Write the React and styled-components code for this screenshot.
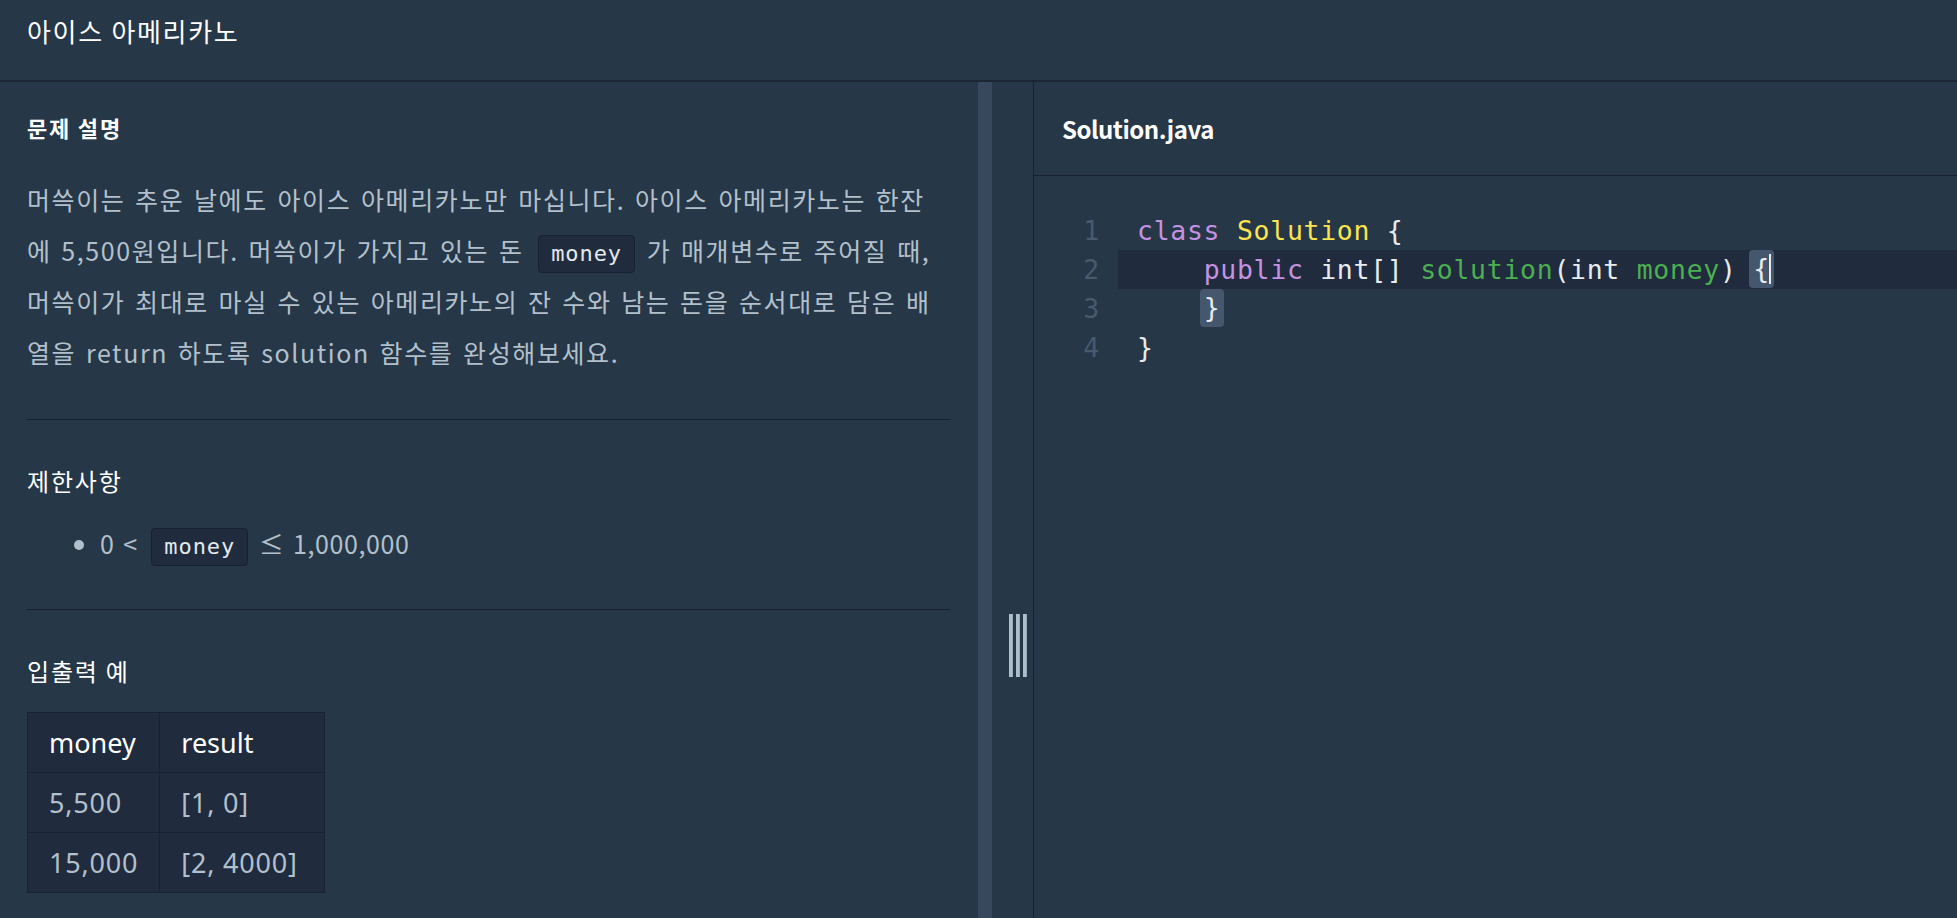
import React from 'react';
import styled, { createGlobalStyle } from 'styled-components';

const KR = `"Noto Sans CJK KR", "Noto Sans", sans-serif`;
const MONO = `"DejaVu Sans Mono", "Liberation Mono", monospace`;

const GlobalStyle = createGlobalStyle`
  html, body { margin: 0; padding: 0; height: 100%; overflow: hidden; background: #263747; }
  #root { height: 100%; }
  *, *::before, *::after { box-sizing: border-box; }
`;

const Page = styled.div`
  height: 100vh;
  display: flex;
  flex-direction: column;
  background: #263747;
  font-family: ${KR};
`;

const TopBar = styled.header`
  height: 82px;
  flex-shrink: 0;
  border-bottom: 2px solid #1b2533;
  padding: 14px 0 0 27px;
  color: #ffffff;
  font-size: 26px;
  letter-spacing: 1.7px;
  line-height: 34px;
`;

const Body = styled.div`
  flex: 1;
  min-height: 0;
  display: flex;
`;

const LeftPanel = styled.section`
  width: 978px;
  flex-shrink: 0;
  padding: 0 28px 0 27px;
  overflow: hidden;
`;

const Section = styled.div`
  padding-top: ${(p) => p.$top}px;
  padding-bottom: ${(p) => p.$bottom || 0}px;
  border-bottom: ${(p) => (p.$divider ? '1px solid #172130' : 'none')};
`;

const Heading = styled.h5`
  margin: 0;
  color: #ffffff;
  font-size: ${(p) => (p.$bold ? 22 : 24)}px;
  font-weight: ${(p) => (p.$bold ? 700 : 400)};
  letter-spacing: 1.8px;
  line-height: 30px;
`;

const Paragraph = styled.p`
  max-width: 914px;
  margin: 32px 0 0;
  color: #b2c0cc;
  font-size: 25px;
  line-height: 51px;
  letter-spacing: 1.6px;
  word-spacing: 2.5px;
`;

const InlineCode = styled.code`
  display: inline-block;
  height: 38px;
  margin: 0 2px 0 5px;
  padding: 0 12px;
  vertical-align: middle;
  background: #202b3d;
  border: 1px solid #172130;
  border-radius: 4px;
  color: #e3e9ef;
  font-family: ${MONO};
  font-size: 22px;
  letter-spacing: 0.9px;
  line-height: 36px;
  word-spacing: 0;
`;

const List = styled.ul`
  margin: 22px 0 0;
  padding-left: 73px;
  color: #b2c0cc;
  font-size: 25px;
  line-height: 51px;
  letter-spacing: 0.6px;
  word-spacing: 2.5px;
`;

const Table = styled.table`
  margin-top: 26px;
  border-collapse: collapse;
  background: #202b3d;
  font-family: "Noto Sans", "Noto Sans CJK KR", sans-serif;
  font-size: 27px;
`;

const Cell = styled.td`
  width: ${(p) => p.$w}px;
  height: 60px;
  padding: 0 21px;
  border: 1px solid #172130;
  color: ${(p) => (p.$head ? '#ffffff' : '#b2c0cc')};
  font-weight: 400;
  letter-spacing: ${(p) => (p.$head ? 0 : 0.8)}px;
  text-align: left;
  vertical-align: middle;
  white-space: nowrap;
`;

const Strip = styled.div`
  width: 14px;
  flex-shrink: 0;
  background: #37485d;
`;

const Splitter = styled.div`
  width: 41px;
  flex-shrink: 0;
  padding: 532px 0 0 17px;
`;

const Handle = styled.div`
  display: flex;
  gap: 3px;
`;

const HandleBar = styled.span`
  width: 4px;
  height: 63px;
  background: #aebdca;
  box-shadow: inset -1px 0 0 #9aaab8;
`;

const RightPanel = styled.section`
  flex: 1;
  min-width: 0;
  display: flex;
  flex-direction: column;
  border-left: 1px solid #172130;
`;

const FileTab = styled.div`
  height: 94px;
  flex-shrink: 0;
  display: flex;
  align-items: center;
  padding-left: 28px;
  border-bottom: 1px solid #172130;
  color: #ffffff;
  font-size: 24px;
  font-weight: 700;
  letter-spacing: -0.5px;
`;

const Editor = styled.div`
  flex: 1;
  padding-top: 35px;
  font-family: ${MONO};
  font-size: 26.5px;
  letter-spacing: 0.7px;
`;

const Line = styled.div`
  display: flex;
  height: 39px;
  line-height: 39px;
`;

const LineNo = styled.span`
  width: 84px;
  flex-shrink: 0;
  padding-right: 18px;
  text-align: right;
  color: #475a6e;
`;

const CodeText = styled.span`
  flex: 1;
  padding-left: 19px;
  white-space: pre;
  color: #e8ebee;
  background: ${(p) => (p.$active ? '#202b3d' : 'transparent')};
`;

const Tok = styled.span`
  color: ${(p) => p.$c};
`;

const Match = styled.span`
  position: relative;
  display: inline-block;
  height: 38px;
  margin: 0 -4px;
  padding: 0 4px;
  line-height: 38px;
  vertical-align: top;
  background: #44576c;
  border-radius: 4px;
`;

const Cursor = styled.span`
  position: absolute;
  right: 3px;
  top: 4px;
  bottom: 4px;
  width: 1.5px;
  background: #e8ebee;
`;

const PURPLE = '#c592e0';
const YELLOW = '#fbe44d';
const GREEN = '#4caf50';

export default function App() {
  return (
    <Page>
      <GlobalStyle />
      <TopBar>아이스 아메리카노</TopBar>
      <Body>
        <LeftPanel>
          <Section $top={30} $bottom={41} $divider>
            <Heading $bold>문제 설명</Heading>
            <Paragraph>
              머쓱이는 추운 날에도 아이스 아메리카노만 마십니다. 아이스 아메리카노는 한잔에 5,500원입니다. 머쓱이가 가지고 있는 돈{' '}
              <InlineCode>money</InlineCode> 가 매개변수로 주어질 때, 머쓱이가 최대로 마실 수 있는 아메리카노의 잔 수와 남는 돈을 순서대로 담은 배열을 return 하도록 solution 함수를 완성해보세요.
            </Paragraph>
          </Section>
          <Section $top={46} $bottom={40} $divider>
            <Heading>제한사항</Heading>
            <List>
              <li>
                0 &lt; <InlineCode>money</InlineCode> ≤ 1,000,000
              </li>
            </List>
          </Section>
          <Section $top={46}>
            <Heading>입출력 예</Heading>
            <Table>
              <thead>
                <tr>
                  <Cell as="th" $head $w={127}>money</Cell>
                  <Cell as="th" $head $w={165}>result</Cell>
                </tr>
              </thead>
              <tbody>
                <tr>
                  <Cell>5,500</Cell>
                  <Cell>[1, 0]</Cell>
                </tr>
                <tr>
                  <Cell>15,000</Cell>
                  <Cell>[2, 4000]</Cell>
                </tr>
              </tbody>
            </Table>
          </Section>
        </LeftPanel>
        <Strip />
        <Splitter>
          <Handle>
            <HandleBar />
            <HandleBar />
            <HandleBar />
          </Handle>
        </Splitter>
        <RightPanel>
          <FileTab>Solution.java</FileTab>
          <Editor>
            <Line>
              <LineNo>1</LineNo>
              <CodeText>
                <Tok $c={PURPLE}>class</Tok> <Tok $c={YELLOW}>Solution</Tok> {'{'}
              </CodeText>
            </Line>
            <Line>
              <LineNo>2</LineNo>
              <CodeText $active>
                {'    '}
                <Tok $c={PURPLE}>public</Tok> int[] <Tok $c={GREEN}>solution</Tok>(int <Tok $c={GREEN}>money</Tok>){' '}
                <Match>
                  {'{'}
                  <Cursor />
                </Match>
              </CodeText>
            </Line>
            <Line>
              <LineNo>3</LineNo>
              <CodeText>
                {'    '}
                <Match>{'}'}</Match>
              </CodeText>
            </Line>
            <Line>
              <LineNo>4</LineNo>
              <CodeText>{'}'}</CodeText>
            </Line>
          </Editor>
        </RightPanel>
      </Body>
    </Page>
  );
}
